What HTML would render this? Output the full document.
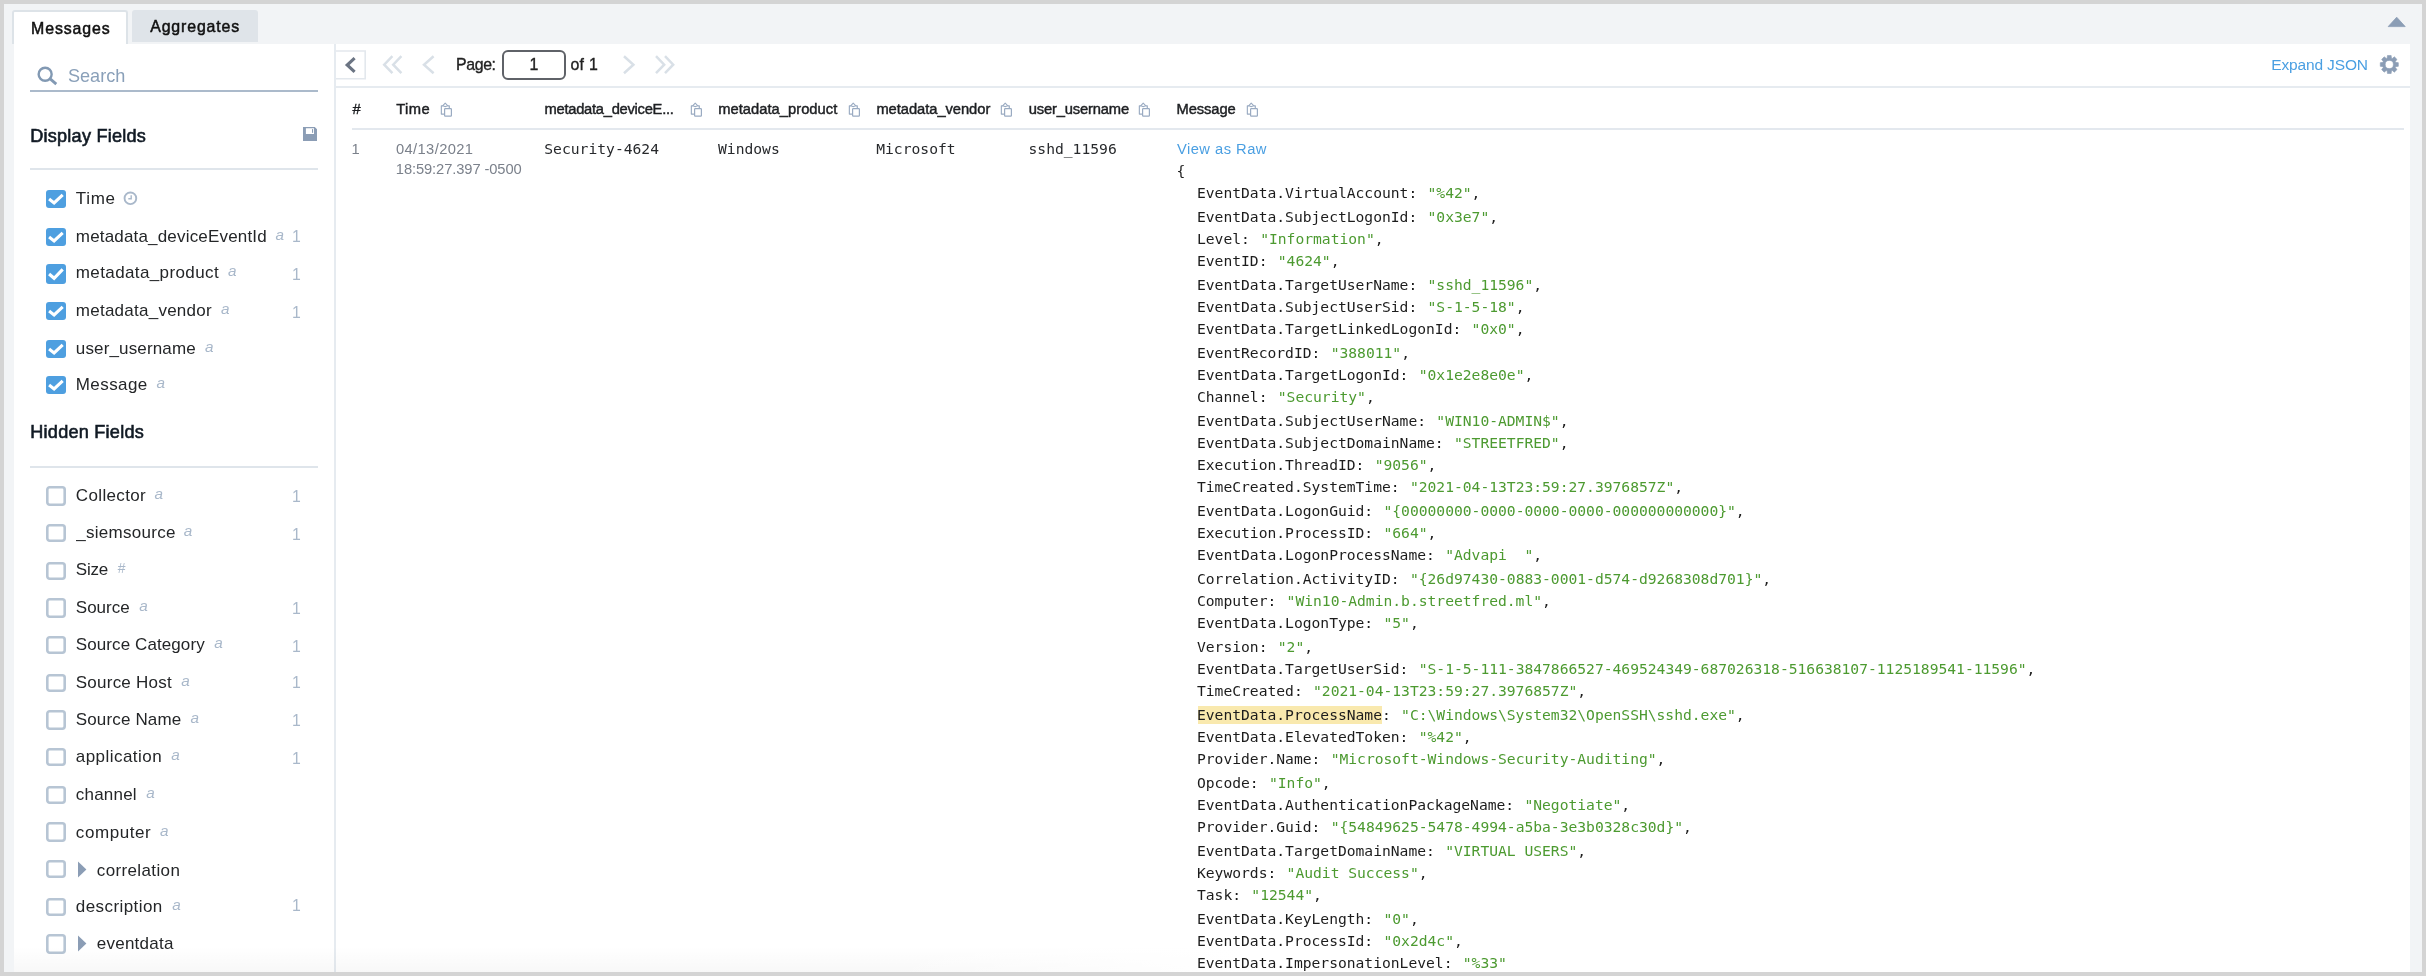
<!DOCTYPE html>
<html lang="en"><head><meta charset="utf-8"><title>Search Results - Messages</title>
<style>
html,body{margin:0;padding:0}
body{width:2426px;height:976px;position:relative;overflow:hidden;background:#d4d4d4;-webkit-font-smoothing:antialiased}
.s,.m{position:absolute;white-space:pre;line-height:20px;margin:0}
.s{font-family:"Liberation Sans",Arial,sans-serif}
.m{font-family:"DejaVu Sans Mono","Liberation Mono",monospace}
.v{color:#4c9a30;margin-left:1.5px}
svg{position:absolute;overflow:visible}
</style></head>
<body>
<div id="app" style="position:absolute;left:0;top:0;width:2426px;height:976px;will-change:transform">
<div style="position:absolute;left:4px;top:4px;width:2418px;height:968px;background:#f2f4f6;"></div>
<div style="position:absolute;left:14px;top:44px;width:2396px;height:928px;background:#fff;"></div>
<div style="position:absolute;left:12px;top:10px;width:112px;height:32px;background:#fff;border:2px solid #dde3e8;border-bottom:0;border-radius:3px 3px 0 0"></div>
<div style="position:absolute;left:132px;top:10px;width:126px;height:32px;background:#dfe4e9;border-radius:3px 3px 0 0"></div>
<div style="position:absolute;left:334px;top:44px;width:2px;height:928px;background:#e6ebf0;"></div>
<div style="position:absolute;left:336px;top:86px;width:2074px;height:2px;background:#e6ebf0;"></div>
<div style="position:absolute;left:352px;top:128px;width:2052px;height:2px;background:#e3e8ee;"></div>
<svg style="left:336px;top:49px" width="32" height="32" viewBox="0 0 32 32"><path d="M0 2 H29.2 V29.8 H0" fill="#fff" stroke="#e3e8ed" stroke-width="1.6"/></svg>
<svg style="left:343px;top:55px" width="16" height="20" viewBox="0 0 16 20"><path d="M11.6 3.2 L4.2 10 L11.6 16.8" fill="none" stroke="#6b7483" stroke-width="3.1" stroke-linejoin="miter"/></svg>
<svg style="left:381px;top:54px" width="24" height="22" viewBox="0 0 24 22"><path d="M11.4 2.2 L3.2 10.7 L11.4 19.2 M20.4 2.2 L12.2 10.7 L20.4 19.2" fill="none" stroke="#d9e0e7" stroke-width="2.5"/></svg>
<svg style="left:421px;top:54px" width="16" height="22" viewBox="0 0 16 22"><path d="M12.6 2.2 L3 10.7 L12.6 19.2" fill="none" stroke="#d9e0e7" stroke-width="2.5"/></svg>
<svg style="left:621px;top:54px" width="16" height="22" viewBox="0 0 16 22"><path d="M3 2.2 L12.4 10.7 L3 19.2" fill="none" stroke="#d9e0e7" stroke-width="2.5"/></svg>
<svg style="left:653px;top:54px" width="24" height="22" viewBox="0 0 24 22"><path d="M3 2.2 L11.2 10.7 L3 19.2 M12 2.2 L20.2 10.7 L12 19.2" fill="none" stroke="#d9e0e7" stroke-width="2.5"/></svg>
<div style="position:absolute;left:502px;top:50px;width:60px;height:25.5px;border:2px solid #5f6268;border-radius:6px;background:#fff"></div>
<svg style="left:2386px;top:15px" width="22" height="14" viewBox="0 0 22 14"><path d="M2.2 11.6 L10.7 2.2 L19.2 11.6 Z" fill="#8b9db5" stroke="#8b9db5" stroke-width="0.8" stroke-linejoin="round"/></svg>
<svg style="left:2378px;top:53px" width="24" height="24" viewBox="0 0 24 24"><path d="M9.13 5.16 L9.47 2.48 L13.13 2.48 L13.47 5.16 L14.25 5.48 L16.38 3.83 L18.97 6.42 L17.32 8.55 L17.64 9.33 L20.32 9.67 L20.32 13.33 L17.64 13.67 L17.32 14.45 L18.97 16.58 L16.38 19.17 L14.25 17.52 L13.47 17.84 L13.13 20.52 L9.47 20.52 L9.13 17.84 L8.35 17.52 L6.22 19.17 L3.63 16.58 L5.28 14.45 L4.96 13.67 L2.28 13.33 L2.28 9.67 L4.96 9.33 L5.28 8.55 L3.63 6.42 L6.22 3.83 L8.35 5.48 Z M7.20 11.50 a4.1 4.1 0 1 0 8.2 0 a4.1 4.1 0 1 0 -8.2 0 Z" fill="#8b9db5" fill-rule="evenodd" stroke="#8b9db5" stroke-width="0.6" stroke-linejoin="round"/></svg>
<svg style="left:36px;top:66px" width="24" height="22" viewBox="0 0 24 22"><circle cx="9.15" cy="8.2" r="6.5" fill="none" stroke="#8299b3" stroke-width="2.4"/><path d="M13.9 12.6 L20.3 18.1" stroke="#8299b3" stroke-width="2.8" stroke-linecap="butt"/></svg>
<div style="position:absolute;left:30px;top:90px;width:288px;height:2px;background:#abbacb;"></div>
<div style="position:absolute;left:30px;top:168px;width:288px;height:2px;background:#dfe5eb;"></div>
<div style="position:absolute;left:30px;top:466px;width:288px;height:2px;background:#dfe5eb;"></div>
<svg style="left:303px;top:127px" width="14" height="14" viewBox="0 0 14 14"><path d="M0 0 H11.8 L14 2.2 V14 H0 Z M2.9 1.3 V7 H11 V1.3 Z" fill="#8b9db5" fill-rule="evenodd"/><rect x="9" y="2.1" width="1.1" height="3.7" fill="#8b9db5"/></svg>
<svg style="left:123px;top:191px" width="15" height="15" viewBox="0 0 15 15"><circle cx="7.4" cy="7.3" r="5.85" fill="none" stroke="#a9b8ca" stroke-width="1.9"/><path d="M8.2 4.3 V7.8 H5.3" fill="none" stroke="#a9b8ca" stroke-width="1.4"/></svg>
<svg style="left:46px;top:190px" width="20" height="18" viewBox="0 0 20 18"><rect x="0" y="0" width="20" height="18" rx="3" fill="#4e9fe0"/><path d="M3.1 9.0 L8.1 12.9 L16.7 4.9" fill="none" stroke="#fff" stroke-width="3.1"/></svg>
<svg style="left:46px;top:228px" width="20" height="18" viewBox="0 0 20 18"><rect x="0" y="0" width="20" height="18" rx="3" fill="#4e9fe0"/><path d="M3.1 9.0 L8.1 12.9 L16.7 4.9" fill="none" stroke="#fff" stroke-width="3.1"/></svg>
<svg style="left:46px;top:264px" width="20" height="20" viewBox="0 0 20 20"><rect x="0" y="0" width="20" height="20" rx="3" fill="#4e9fe0"/><path d="M3.1 10.0 L8.1 14.3 L16.7 5.4" fill="none" stroke="#fff" stroke-width="3.1"/></svg>
<svg style="left:46px;top:302px" width="20" height="18" viewBox="0 0 20 18"><rect x="0" y="0" width="20" height="18" rx="3" fill="#4e9fe0"/><path d="M3.1 9.0 L8.1 12.9 L16.7 4.9" fill="none" stroke="#fff" stroke-width="3.1"/></svg>
<svg style="left:46px;top:340px" width="20" height="18" viewBox="0 0 20 18"><rect x="0" y="0" width="20" height="18" rx="3" fill="#4e9fe0"/><path d="M3.1 9.0 L8.1 12.9 L16.7 4.9" fill="none" stroke="#fff" stroke-width="3.1"/></svg>
<svg style="left:46px;top:376px" width="20" height="18" viewBox="0 0 20 18"><rect x="0" y="0" width="20" height="18" rx="3" fill="#4e9fe0"/><path d="M3.1 9.0 L8.1 12.9 L16.7 4.9" fill="none" stroke="#fff" stroke-width="3.1"/></svg>
<svg style="left:46px;top:486px" width="20" height="20" viewBox="0 0 20 20"><rect x="1.3" y="1.3" width="17.4" height="17.4" rx="2.4" fill="#fff" stroke="#b7c5d4" stroke-width="2.6"/></svg>
<svg style="left:46px;top:524px" width="20" height="18" viewBox="0 0 20 18"><rect x="1.3" y="1.3" width="17.4" height="15.4" rx="2.4" fill="#fff" stroke="#b7c5d4" stroke-width="2.6"/></svg>
<svg style="left:46px;top:562px" width="20" height="18" viewBox="0 0 20 18"><rect x="1.3" y="1.3" width="17.4" height="15.4" rx="2.4" fill="#fff" stroke="#b7c5d4" stroke-width="2.6"/></svg>
<svg style="left:46px;top:598px" width="20" height="20" viewBox="0 0 20 20"><rect x="1.3" y="1.3" width="17.4" height="17.4" rx="2.4" fill="#fff" stroke="#b7c5d4" stroke-width="2.6"/></svg>
<svg style="left:46px;top:636px" width="20" height="18" viewBox="0 0 20 18"><rect x="1.3" y="1.3" width="17.4" height="15.4" rx="2.4" fill="#fff" stroke="#b7c5d4" stroke-width="2.6"/></svg>
<svg style="left:46px;top:674px" width="20" height="18" viewBox="0 0 20 18"><rect x="1.3" y="1.3" width="17.4" height="15.4" rx="2.4" fill="#fff" stroke="#b7c5d4" stroke-width="2.6"/></svg>
<svg style="left:46px;top:710px" width="20" height="20" viewBox="0 0 20 20"><rect x="1.3" y="1.3" width="17.4" height="17.4" rx="2.4" fill="#fff" stroke="#b7c5d4" stroke-width="2.6"/></svg>
<svg style="left:46px;top:748px" width="20" height="18" viewBox="0 0 20 18"><rect x="1.3" y="1.3" width="17.4" height="15.4" rx="2.4" fill="#fff" stroke="#b7c5d4" stroke-width="2.6"/></svg>
<svg style="left:46px;top:786px" width="20" height="18" viewBox="0 0 20 18"><rect x="1.3" y="1.3" width="17.4" height="15.4" rx="2.4" fill="#fff" stroke="#b7c5d4" stroke-width="2.6"/></svg>
<svg style="left:46px;top:822px" width="20" height="20" viewBox="0 0 20 20"><rect x="1.3" y="1.3" width="17.4" height="17.4" rx="2.4" fill="#fff" stroke="#b7c5d4" stroke-width="2.6"/></svg>
<svg style="left:46px;top:860px" width="20" height="18" viewBox="0 0 20 18"><rect x="1.3" y="1.3" width="17.4" height="15.4" rx="2.4" fill="#fff" stroke="#b7c5d4" stroke-width="2.6"/></svg>
<svg style="left:77px;top:861px" width="11" height="18" viewBox="0 0 11 18"><path d="M1 0.6 L9.4 8.6 L1 16.6 Z" fill="#8b9db5"/></svg>
<svg style="left:46px;top:898px" width="20" height="18" viewBox="0 0 20 18"><rect x="1.3" y="1.3" width="17.4" height="15.4" rx="2.4" fill="#fff" stroke="#b7c5d4" stroke-width="2.6"/></svg>
<svg style="left:46px;top:934px" width="20" height="20" viewBox="0 0 20 20"><rect x="1.3" y="1.3" width="17.4" height="17.4" rx="2.4" fill="#fff" stroke="#b7c5d4" stroke-width="2.6"/></svg>
<svg style="left:77px;top:935px" width="11" height="18" viewBox="0 0 11 18"><path d="M1 0.6 L9.4 8.6 L1 16.6 Z" fill="#8b9db5"/></svg>
<svg style="left:440.0px;top:102px" width="13" height="16" viewBox="0 0 13 16"><path d="M3.3 3.8 H1.35 V12.1 H4.4 M7.4 3.8 H9.3 V6.4" fill="none" stroke="#9aabc2" stroke-width="1.15" stroke-linejoin="round"/><path d="M2.9 3.7 L5.2 1.1 L7.6 3.7 Q5.25 5.6 2.9 3.7 Z" fill="none" stroke="#9aabc2" stroke-width="1.05" stroke-linejoin="round"/><rect x="4.6" y="6.6" width="6.8" height="7.6" rx="0.7" fill="#fff" stroke="#9aabc2" stroke-width="1.2"/></svg>
<svg style="left:690.0px;top:102px" width="13" height="16" viewBox="0 0 13 16"><path d="M3.3 3.8 H1.35 V12.1 H4.4 M7.4 3.8 H9.3 V6.4" fill="none" stroke="#9aabc2" stroke-width="1.15" stroke-linejoin="round"/><path d="M2.9 3.7 L5.2 1.1 L7.6 3.7 Q5.25 5.6 2.9 3.7 Z" fill="none" stroke="#9aabc2" stroke-width="1.05" stroke-linejoin="round"/><rect x="4.6" y="6.6" width="6.8" height="7.6" rx="0.7" fill="#fff" stroke="#9aabc2" stroke-width="1.2"/></svg>
<svg style="left:848.0px;top:102px" width="13" height="16" viewBox="0 0 13 16"><path d="M3.3 3.8 H1.35 V12.1 H4.4 M7.4 3.8 H9.3 V6.4" fill="none" stroke="#9aabc2" stroke-width="1.15" stroke-linejoin="round"/><path d="M2.9 3.7 L5.2 1.1 L7.6 3.7 Q5.25 5.6 2.9 3.7 Z" fill="none" stroke="#9aabc2" stroke-width="1.05" stroke-linejoin="round"/><rect x="4.6" y="6.6" width="6.8" height="7.6" rx="0.7" fill="#fff" stroke="#9aabc2" stroke-width="1.2"/></svg>
<svg style="left:1000.0px;top:102px" width="13" height="16" viewBox="0 0 13 16"><path d="M3.3 3.8 H1.35 V12.1 H4.4 M7.4 3.8 H9.3 V6.4" fill="none" stroke="#9aabc2" stroke-width="1.15" stroke-linejoin="round"/><path d="M2.9 3.7 L5.2 1.1 L7.6 3.7 Q5.25 5.6 2.9 3.7 Z" fill="none" stroke="#9aabc2" stroke-width="1.05" stroke-linejoin="round"/><rect x="4.6" y="6.6" width="6.8" height="7.6" rx="0.7" fill="#fff" stroke="#9aabc2" stroke-width="1.2"/></svg>
<svg style="left:1138.0px;top:102px" width="13" height="16" viewBox="0 0 13 16"><path d="M3.3 3.8 H1.35 V12.1 H4.4 M7.4 3.8 H9.3 V6.4" fill="none" stroke="#9aabc2" stroke-width="1.15" stroke-linejoin="round"/><path d="M2.9 3.7 L5.2 1.1 L7.6 3.7 Q5.25 5.6 2.9 3.7 Z" fill="none" stroke="#9aabc2" stroke-width="1.05" stroke-linejoin="round"/><rect x="4.6" y="6.6" width="6.8" height="7.6" rx="0.7" fill="#fff" stroke="#9aabc2" stroke-width="1.2"/></svg>
<svg style="left:1246.0px;top:102px" width="13" height="16" viewBox="0 0 13 16"><path d="M3.3 3.8 H1.35 V12.1 H4.4 M7.4 3.8 H9.3 V6.4" fill="none" stroke="#9aabc2" stroke-width="1.15" stroke-linejoin="round"/><path d="M2.9 3.7 L5.2 1.1 L7.6 3.7 Q5.25 5.6 2.9 3.7 Z" fill="none" stroke="#9aabc2" stroke-width="1.05" stroke-linejoin="round"/><rect x="4.6" y="6.6" width="6.8" height="7.6" rx="0.7" fill="#fff" stroke="#9aabc2" stroke-width="1.2"/></svg>
<div style="position:absolute;left:1198px;top:706px;width:184px;height:18px;background:#f9e9ae;"></div>
<div style="position:absolute;left:14px;top:946px;width:1240px;height:26px;background:linear-gradient(to right,rgba(255,255,255,0) 70%,#fff 100%),linear-gradient(to bottom,rgba(0,0,0,0),rgba(0,0,0,0.028))"></div>
<div class="s" style="left:75.8px;top:189px;font-size:17.0px;color:#242628;letter-spacing:0.666px;">Time</div>
<div class="s" style="left:75.8px;top:227px;font-size:17.0px;color:#242628;letter-spacing:0.178px;">metadata_deviceEventId</div>
<div class="s" style="left:275.6px;top:225px;font-size:15.3px;color:#a9b8ca;font-style:italic;">a</div>
<div class="s" style="left:292.0px;top:227px;font-size:15.8px;color:#a9b8ca;">1</div>
<div class="s" style="left:75.8px;top:263px;font-size:17.0px;color:#242628;letter-spacing:0.387px;">metadata_product</div>
<div class="s" style="left:228.0px;top:261px;font-size:15.3px;color:#a9b8ca;font-style:italic;">a</div>
<div class="s" style="left:292.0px;top:265px;font-size:15.8px;color:#a9b8ca;">1</div>
<div class="s" style="left:75.8px;top:301px;font-size:17.0px;color:#242628;letter-spacing:0.252px;">metadata_vendor</div>
<div class="s" style="left:221.0px;top:299px;font-size:15.3px;color:#a9b8ca;font-style:italic;">a</div>
<div class="s" style="left:292.0px;top:303px;font-size:15.8px;color:#a9b8ca;">1</div>
<div class="s" style="left:75.8px;top:339px;font-size:17.0px;color:#242628;letter-spacing:0.152px;">user_username</div>
<div class="s" style="left:205.0px;top:337px;font-size:15.3px;color:#a9b8ca;font-style:italic;">a</div>
<div class="s" style="left:75.8px;top:375px;font-size:17.0px;color:#242628;letter-spacing:0.411px;">Message</div>
<div class="s" style="left:156.6px;top:373px;font-size:15.3px;color:#a9b8ca;font-style:italic;">a</div>
<div class="s" style="left:75.8px;top:486px;font-size:17.0px;color:#242628;letter-spacing:0.357px;">Collector</div>
<div class="s" style="left:154.6px;top:484px;font-size:15.3px;color:#a9b8ca;font-style:italic;">a</div>
<div class="s" style="left:292.0px;top:487px;font-size:15.8px;color:#a9b8ca;">1</div>
<div class="s" style="left:76.3px;top:523px;font-size:17.0px;color:#242628;letter-spacing:0.278px;">_siemsource</div>
<div class="s" style="left:183.79999999999998px;top:521px;font-size:15.3px;color:#a9b8ca;font-style:italic;">a</div>
<div class="s" style="left:292.0px;top:525px;font-size:15.8px;color:#a9b8ca;">1</div>
<div class="s" style="left:75.8px;top:560px;font-size:17.0px;color:#242628;letter-spacing:-0.208px;">Size</div>
<div class="s" style="left:117.6px;top:558px;font-size:14.0px;color:#a9b8ca;font-style:italic;">#</div>
<div class="s" style="left:75.8px;top:598px;font-size:17.0px;color:#242628;letter-spacing:-0.004px;">Source</div>
<div class="s" style="left:139.29999999999998px;top:596px;font-size:15.3px;color:#a9b8ca;font-style:italic;">a</div>
<div class="s" style="left:292.0px;top:599px;font-size:15.8px;color:#a9b8ca;">1</div>
<div class="s" style="left:75.8px;top:635px;font-size:17.0px;color:#242628;letter-spacing:0.091px;">Source Category</div>
<div class="s" style="left:214.29999999999998px;top:633px;font-size:15.3px;color:#a9b8ca;font-style:italic;">a</div>
<div class="s" style="left:292.0px;top:637px;font-size:15.8px;color:#a9b8ca;">1</div>
<div class="s" style="left:75.8px;top:673px;font-size:17.0px;color:#242628;letter-spacing:0.231px;">Source Host</div>
<div class="s" style="left:181.29999999999998px;top:671px;font-size:15.3px;color:#a9b8ca;font-style:italic;">a</div>
<div class="s" style="left:292.0px;top:673px;font-size:15.8px;color:#a9b8ca;">1</div>
<div class="s" style="left:75.8px;top:710px;font-size:17.0px;color:#242628;letter-spacing:0.142px;">Source Name</div>
<div class="s" style="left:190.6px;top:708px;font-size:15.3px;color:#a9b8ca;font-style:italic;">a</div>
<div class="s" style="left:292.0px;top:711px;font-size:15.8px;color:#a9b8ca;">1</div>
<div class="s" style="left:75.8px;top:747px;font-size:17.0px;color:#242628;letter-spacing:0.457px;">application</div>
<div class="s" style="left:171.29999999999998px;top:745px;font-size:15.3px;color:#a9b8ca;font-style:italic;">a</div>
<div class="s" style="left:292.0px;top:749px;font-size:15.8px;color:#a9b8ca;">1</div>
<div class="s" style="left:75.8px;top:785px;font-size:17.0px;color:#242628;letter-spacing:0.215px;">channel</div>
<div class="s" style="left:146.29999999999998px;top:783px;font-size:15.3px;color:#a9b8ca;font-style:italic;">a</div>
<div class="s" style="left:75.8px;top:823px;font-size:17.0px;color:#242628;letter-spacing:0.583px;">computer</div>
<div class="s" style="left:160.1px;top:821px;font-size:15.3px;color:#a9b8ca;font-style:italic;">a</div>
<div class="s" style="left:96.8px;top:861px;font-size:17.0px;color:#242628;letter-spacing:0.368px;">correlation</div>
<div class="s" style="left:75.8px;top:897px;font-size:17.0px;color:#242628;letter-spacing:0.423px;">description</div>
<div class="s" style="left:172.29999999999998px;top:895px;font-size:15.3px;color:#a9b8ca;font-style:italic;">a</div>
<div class="s" style="left:292.0px;top:896px;font-size:15.8px;color:#a9b8ca;">1</div>
<div class="s" style="left:96.8px;top:934px;font-size:17.0px;color:#242628;letter-spacing:0.233px;">eventdata</div>
<div class="s" style="left:31.0px;top:19px;font-size:15.9px;color:#111;-webkit-text-stroke:0.5px #111;letter-spacing:0.912px;">Messages</div>
<div class="s" style="left:150.2px;top:17px;font-size:15.9px;color:#111;-webkit-text-stroke:0.5px #111;letter-spacing:0.860px;">Aggregates</div>
<div class="s" style="left:68.0px;top:66px;font-size:18.1px;color:#8aa0b9;letter-spacing:-0.012px;">Search</div>
<div class="s" style="left:30.3px;top:126px;font-size:18.1px;color:#111a24;-webkit-text-stroke:0.6px #111a24;letter-spacing:0.220px;">Display Fields</div>
<div class="s" style="left:30.3px;top:422px;font-size:18.1px;color:#111a24;-webkit-text-stroke:0.6px #111a24;letter-spacing:0.237px;">Hidden Fields</div>
<div class="s" style="left:456.0px;top:55px;font-size:15.9px;color:#222;-webkit-text-stroke:0.35px #222;letter-spacing:-0.377px;">Page:</div>
<div class="s" style="left:529.58px;top:55px;font-size:15.9px;color:#222;-webkit-text-stroke:0.35px #222;">1</div>
<div class="s" style="left:570.4px;top:55px;font-size:15.9px;color:#222;-webkit-text-stroke:0.35px #222;letter-spacing:0.303px;">of 1</div>
<div class="s" style="left:2271.2px;top:55px;font-size:15.5px;color:#4a9fe2;letter-spacing:-0.141px;">Expand JSON</div>
<div class="s" style="left:352.6px;top:99px;font-size:14.73px;color:#1d1f22;-webkit-text-stroke:0.4px #1d1f22;">#</div>
<div class="s" style="left:396.3px;top:99px;font-size:14.73px;color:#1d1f22;-webkit-text-stroke:0.45px #1d1f22;letter-spacing:0.374px;">Time</div>
<div class="s" style="left:544.5px;top:99px;font-size:14.73px;color:#1d1f22;-webkit-text-stroke:0.45px #1d1f22;letter-spacing:-0.266px;">metadata_deviceE...</div>
<div class="s" style="left:718.2px;top:99px;font-size:14.73px;color:#1d1f22;-webkit-text-stroke:0.45px #1d1f22;letter-spacing:0.029px;">metadata_product</div>
<div class="s" style="left:876.4000000000001px;top:99px;font-size:14.73px;color:#1d1f22;-webkit-text-stroke:0.45px #1d1f22;letter-spacing:-0.048px;">metadata_vendor</div>
<div class="s" style="left:1028.7px;top:99px;font-size:14.73px;color:#1d1f22;-webkit-text-stroke:0.45px #1d1f22;letter-spacing:-0.157px;">user_username</div>
<div class="s" style="left:1176.5px;top:99px;font-size:14.73px;color:#1d1f22;-webkit-text-stroke:0.45px #1d1f22;letter-spacing:-0.090px;">Message</div>
<div class="s" style="left:351.6px;top:139px;font-size:14.73px;color:#7b818b;">1</div>
<div class="s" style="left:396.0px;top:139px;font-size:14.73px;color:#7b818b;letter-spacing:0.369px;">04/13/2021</div>
<div class="s" style="left:395.8px;top:159px;font-size:14.73px;color:#7b818b;letter-spacing:-0.106px;">18:59:27.397 -0500</div>
<div class="m" style="left:544.3px;top:139px;font-size:14.66px;color:#27292c;">Security-4624</div>
<div class="m" style="left:718.0px;top:139px;font-size:14.66px;color:#27292c;">Windows</div>
<div class="m" style="left:876.2px;top:139px;font-size:14.66px;color:#27292c;">Microsoft</div>
<div class="m" style="left:1028.5px;top:139px;font-size:14.66px;color:#27292c;">sshd_11596</div>
<div class="s" style="left:1176.9px;top:139px;font-size:14.73px;color:#4a9fe2;letter-spacing:0.478px;">View as Raw</div>
<div class="m" style="left:1176.4px;top:161px;font-size:14.66px;color:#1c1c1c;">{</div>
<div class="m" style="left:1197.0px;top:183px;font-size:14.66px;color:#1c1c1c;letter-spacing:-0.015px;">EventData.VirtualAccount: <span class="v">&quot;%42&quot;</span>,</div>
<div class="m" style="left:1197.0px;top:207px;font-size:14.66px;color:#1c1c1c;letter-spacing:-0.015px;">EventData.SubjectLogonId: <span class="v">&quot;0x3e7&quot;</span>,</div>
<div class="m" style="left:1197.0px;top:229px;font-size:14.66px;color:#1c1c1c;letter-spacing:-0.015px;">Level: <span class="v">&quot;Information&quot;</span>,</div>
<div class="m" style="left:1197.0px;top:251px;font-size:14.66px;color:#1c1c1c;letter-spacing:-0.015px;">EventID: <span class="v">&quot;4624&quot;</span>,</div>
<div class="m" style="left:1197.0px;top:275px;font-size:14.66px;color:#1c1c1c;letter-spacing:-0.015px;">EventData.TargetUserName: <span class="v">&quot;sshd_11596&quot;</span>,</div>
<div class="m" style="left:1197.0px;top:297px;font-size:14.66px;color:#1c1c1c;letter-spacing:-0.015px;">EventData.SubjectUserSid: <span class="v">&quot;S-1-5-18&quot;</span>,</div>
<div class="m" style="left:1197.0px;top:319px;font-size:14.66px;color:#1c1c1c;letter-spacing:-0.015px;">EventData.TargetLinkedLogonId: <span class="v">&quot;0x0&quot;</span>,</div>
<div class="m" style="left:1197.0px;top:343px;font-size:14.66px;color:#1c1c1c;letter-spacing:-0.015px;">EventRecordID: <span class="v">&quot;388011&quot;</span>,</div>
<div class="m" style="left:1197.0px;top:365px;font-size:14.66px;color:#1c1c1c;letter-spacing:-0.015px;">EventData.TargetLogonId: <span class="v">&quot;0x1e2e8e0e&quot;</span>,</div>
<div class="m" style="left:1197.0px;top:387px;font-size:14.66px;color:#1c1c1c;letter-spacing:-0.015px;">Channel: <span class="v">&quot;Security&quot;</span>,</div>
<div class="m" style="left:1197.0px;top:411px;font-size:14.66px;color:#1c1c1c;letter-spacing:-0.015px;">EventData.SubjectUserName: <span class="v">&quot;WIN10-ADMIN$&quot;</span>,</div>
<div class="m" style="left:1197.0px;top:433px;font-size:14.66px;color:#1c1c1c;letter-spacing:-0.015px;">EventData.SubjectDomainName: <span class="v">&quot;STREETFRED&quot;</span>,</div>
<div class="m" style="left:1197.0px;top:455px;font-size:14.66px;color:#1c1c1c;letter-spacing:-0.015px;">Execution.ThreadID: <span class="v">&quot;9056&quot;</span>,</div>
<div class="m" style="left:1197.0px;top:477px;font-size:14.66px;color:#1c1c1c;letter-spacing:-0.015px;">TimeCreated.SystemTime: <span class="v">&quot;2021-04-13T23:59:27.3976857Z&quot;</span>,</div>
<div class="m" style="left:1197.0px;top:501px;font-size:14.66px;color:#1c1c1c;letter-spacing:-0.015px;">EventData.LogonGuid: <span class="v">&quot;{00000000-0000-0000-0000-000000000000}&quot;</span>,</div>
<div class="m" style="left:1197.0px;top:523px;font-size:14.66px;color:#1c1c1c;letter-spacing:-0.015px;">Execution.ProcessID: <span class="v">&quot;664&quot;</span>,</div>
<div class="m" style="left:1197.0px;top:545px;font-size:14.66px;color:#1c1c1c;letter-spacing:-0.015px;">EventData.LogonProcessName: <span class="v">&quot;Advapi  &quot;</span>,</div>
<div class="m" style="left:1197.0px;top:569px;font-size:14.66px;color:#1c1c1c;letter-spacing:-0.015px;">Correlation.ActivityID: <span class="v">&quot;{26d97430-0883-0001-d574-d9268308d701}&quot;</span>,</div>
<div class="m" style="left:1197.0px;top:591px;font-size:14.66px;color:#1c1c1c;letter-spacing:-0.015px;">Computer: <span class="v">&quot;Win10-Admin.b.streetfred.ml&quot;</span>,</div>
<div class="m" style="left:1197.0px;top:613px;font-size:14.66px;color:#1c1c1c;letter-spacing:-0.015px;">EventData.LogonType: <span class="v">&quot;5&quot;</span>,</div>
<div class="m" style="left:1197.0px;top:637px;font-size:14.66px;color:#1c1c1c;letter-spacing:-0.015px;">Version: <span class="v">&quot;2&quot;</span>,</div>
<div class="m" style="left:1197.0px;top:659px;font-size:14.66px;color:#1c1c1c;letter-spacing:-0.015px;">EventData.TargetUserSid: <span class="v">&quot;S-1-5-111-3847866527-469524349-687026318-516638107-1125189541-11596&quot;</span>,</div>
<div class="m" style="left:1197.0px;top:681px;font-size:14.66px;color:#1c1c1c;letter-spacing:-0.015px;">TimeCreated: <span class="v">&quot;2021-04-13T23:59:27.3976857Z&quot;</span>,</div>
<div class="m" style="left:1197.0px;top:705px;font-size:14.66px;color:#1c1c1c;letter-spacing:-0.015px;">EventData.ProcessName: <span class="v">&quot;C:\Windows\System32\OpenSSH\sshd.exe&quot;</span>,</div>
<div class="m" style="left:1197.0px;top:727px;font-size:14.66px;color:#1c1c1c;letter-spacing:-0.015px;">EventData.ElevatedToken: <span class="v">&quot;%42&quot;</span>,</div>
<div class="m" style="left:1197.0px;top:749px;font-size:14.66px;color:#1c1c1c;letter-spacing:-0.015px;">Provider.Name: <span class="v">&quot;Microsoft-Windows-Security-Auditing&quot;</span>,</div>
<div class="m" style="left:1197.0px;top:773px;font-size:14.66px;color:#1c1c1c;letter-spacing:-0.015px;">Opcode: <span class="v">&quot;Info&quot;</span>,</div>
<div class="m" style="left:1197.0px;top:795px;font-size:14.66px;color:#1c1c1c;letter-spacing:-0.015px;">EventData.AuthenticationPackageName: <span class="v">&quot;Negotiate&quot;</span>,</div>
<div class="m" style="left:1197.0px;top:817px;font-size:14.66px;color:#1c1c1c;letter-spacing:-0.015px;">Provider.Guid: <span class="v">&quot;{54849625-5478-4994-a5ba-3e3b0328c30d}&quot;</span>,</div>
<div class="m" style="left:1197.0px;top:841px;font-size:14.66px;color:#1c1c1c;letter-spacing:-0.015px;">EventData.TargetDomainName: <span class="v">&quot;VIRTUAL USERS&quot;</span>,</div>
<div class="m" style="left:1197.0px;top:863px;font-size:14.66px;color:#1c1c1c;letter-spacing:-0.015px;">Keywords: <span class="v">&quot;Audit Success&quot;</span>,</div>
<div class="m" style="left:1197.0px;top:885px;font-size:14.66px;color:#1c1c1c;letter-spacing:-0.015px;">Task: <span class="v">&quot;12544&quot;</span>,</div>
<div class="m" style="left:1197.0px;top:909px;font-size:14.66px;color:#1c1c1c;letter-spacing:-0.015px;">EventData.KeyLength: <span class="v">&quot;0&quot;</span>,</div>
<div class="m" style="left:1197.0px;top:931px;font-size:14.66px;color:#1c1c1c;letter-spacing:-0.015px;">EventData.ProcessId: <span class="v">&quot;0x2d4c&quot;</span>,</div>
<div class="m" style="left:1197.0px;top:953px;font-size:14.66px;color:#1c1c1c;letter-spacing:-0.015px;">EventData.ImpersonationLevel: <span class="v">&quot;%33&quot;</span></div>
</div>
</body></html>
